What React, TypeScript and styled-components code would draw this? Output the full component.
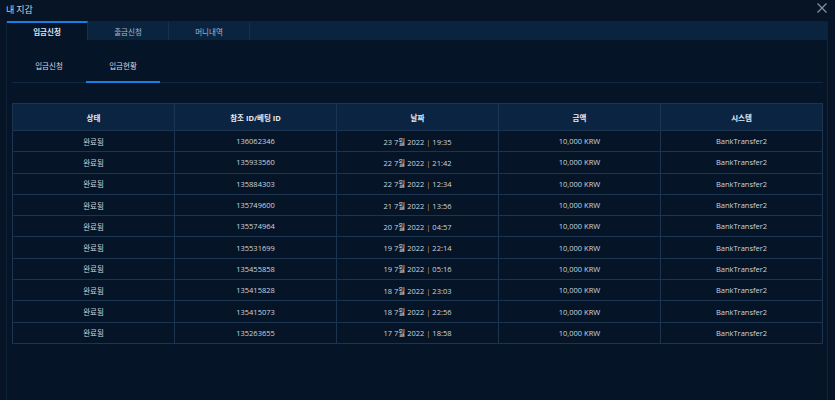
import React from 'react'
import styled, { createGlobalStyle } from 'styled-components'

interface Deposit {
	id: string
	day: string
	time: string
}

const deposits: Deposit[] = [
	{ id: '136062346', day: '23', time: '19:35' },
	{ id: '135933560', day: '22', time: '21:42' },
	{ id: '135884303', day: '22', time: '12:34' },
	{ id: '135749600', day: '21', time: '13:56' },
	{ id: '135574964', day: '20', time: '04:57' },
	{ id: '135531699', day: '19', time: '22:14' },
	{ id: '135455858', day: '19', time: '05:16' },
	{ id: '135415828', day: '18', time: '23:03' },
	{ id: '135415073', day: '18', time: '22:56' },
	{ id: '135263655', day: '17', time: '18:58' },
]

const mainTabs = ['입금신청', '출금신청', '머니내역']
const subTabs = ['입금신청', '입금현황']
const columns = ['상태', '참조 ID/베팅 ID', '날짜', '금액', '시스템']

const App: React.FC = () => {
	return (
		<>
			<GlobalStyle />
			<Page>
				<Header>
					<Title>내 지갑</Title>
					<CloseButton aria-label='close'>
						<svg width='10' height='10' viewBox='0 0 10 10'>
							<path d='M0.5 0.5 L9.5 9.5 M9.5 0.5 L0.5 9.5' stroke='#8593a3' strokeWidth='1.2' />
						</svg>
					</CloseButton>
				</Header>

				<Panel>
					<TabBar>
						{mainTabs.map((tab, i) => (
							<Tab key={tab} active={i === 0}>{tab}</Tab>
						))}
					</TabBar>

					<SubTabBar>
						{subTabs.map((tab, i) => (
							<SubTab key={tab} active={i === 1}>{tab}</SubTab>
						))}
					</SubTabBar>

					<Table>
						<thead>
							<tr>
								{columns.map((col) => (
									<HeadCell key={col}>{col}</HeadCell>
								))}
							</tr>
						</thead>
						<tbody>
							{deposits.map((d) => (
								<tr key={d.id}>
									<Cell>완료됨</Cell>
									<Cell>{d.id}</Cell>
									<Cell>
										{d.day} 7월 2022 <Separator>|</Separator> {d.time}
									</Cell>
									<Cell>10,000 KRW</Cell>
									<Cell>BankTransfer2</Cell>
								</tr>
							))}
						</tbody>
					</Table>
				</Panel>
			</Page>
		</>
	)
}

const GlobalStyle = createGlobalStyle`
	html, body {
		margin: 0;
		padding: 0;
		background: #061426;
	}

	body {
		font-family: 'Open Sans', 'Noto Sans CJK KR', sans-serif;
		color: #d3dae3;
	}
`

const Page = styled.div`
	height: 400px;
	display: flex;
	flex-direction: column;
	overflow: hidden;
`

const Header = styled.div`
	height: 21px;
	flex-shrink: 0;
	display: flex;
	align-items: center;
	justify-content: space-between;
	padding: 0 8px 2px 6px;
	box-sizing: border-box;
`

const Title = styled.div`
	font-size: 9px;
	color: #c9d1db;
	font-family: 'Noto Sans CJK KR', sans-serif;
	line-height: 1;
`

const CloseButton = styled.div`
	display: flex;
	margin-bottom: 4px;
`

const Panel = styled.div`
	flex: 1;
	margin: 0 7px 0 6px;
	background: #051426;
	border-left: 1px solid #0f2339;
	border-right: 1px solid #0f2339;
	display: flex;
	flex-direction: column;
`

const TabBar = styled.div`
	height: 19px;
	display: flex;
	background: #0a2440;
	border-top-right-radius: 2px;
`

const Tab = styled.div<{ active?: boolean }>`
	width: 81px;
	display: flex;
	align-items: center;
	justify-content: center;
	box-sizing: border-box;
	font-size: 7.5px;
	font-weight: ${(p) => (p.active ? 700 : 400)};
	color: ${(p) => (p.active ? '#dfe6ee' : '#aab6c4')};
	background: ${(p) => (p.active ? '#051426' : '#0a2440')};
	border-top: 2px solid ${(p) => (p.active ? '#1a7de0' : 'transparent')};
	border-right: 1px solid #17304b;
	padding-bottom: 1px;
`

const SubTabBar = styled.div`
	display: flex;
	margin: 12px 4px 0 5px;
	border-bottom: 1px solid #122740;
`

const SubTab = styled.div<{ active?: boolean }>`
	width: 74px;
	height: 31px;
	display: flex;
	align-items: center;
	justify-content: center;
	padding-bottom: 2px;
	box-sizing: border-box;
	font-size: 7.5px;
	color: #cfd7e0;
	border-bottom: 2px solid ${(p) => (p.active ? '#1a7de0' : 'transparent')};
	margin-bottom: -1px;
`

const Table = styled.table`
	margin: 20px 4px 0 5px;
	border-collapse: collapse;
	table-layout: fixed;
	width: calc(100% - 9px);
	border: 1px solid #1c3450;
`

const HeadCell = styled.th`
	height: 26px;
	padding: 0;
	background: #0a2441;
	border: 1px solid #1c3450;
	font-size: 7.5px;
	font-weight: 700;
	color: #e6ecf3;
	text-align: center;
	vertical-align: middle;
`

const Cell = styled.td`
	height: 20.3px;
	padding: 0;
	border: 1px solid #1c3450;
	font-size: 7.5px;
	color: #cdd5de;
	text-align: center;
	vertical-align: middle;
`

const Separator = styled.span`
	color: #c8a54e;
`

export default App
